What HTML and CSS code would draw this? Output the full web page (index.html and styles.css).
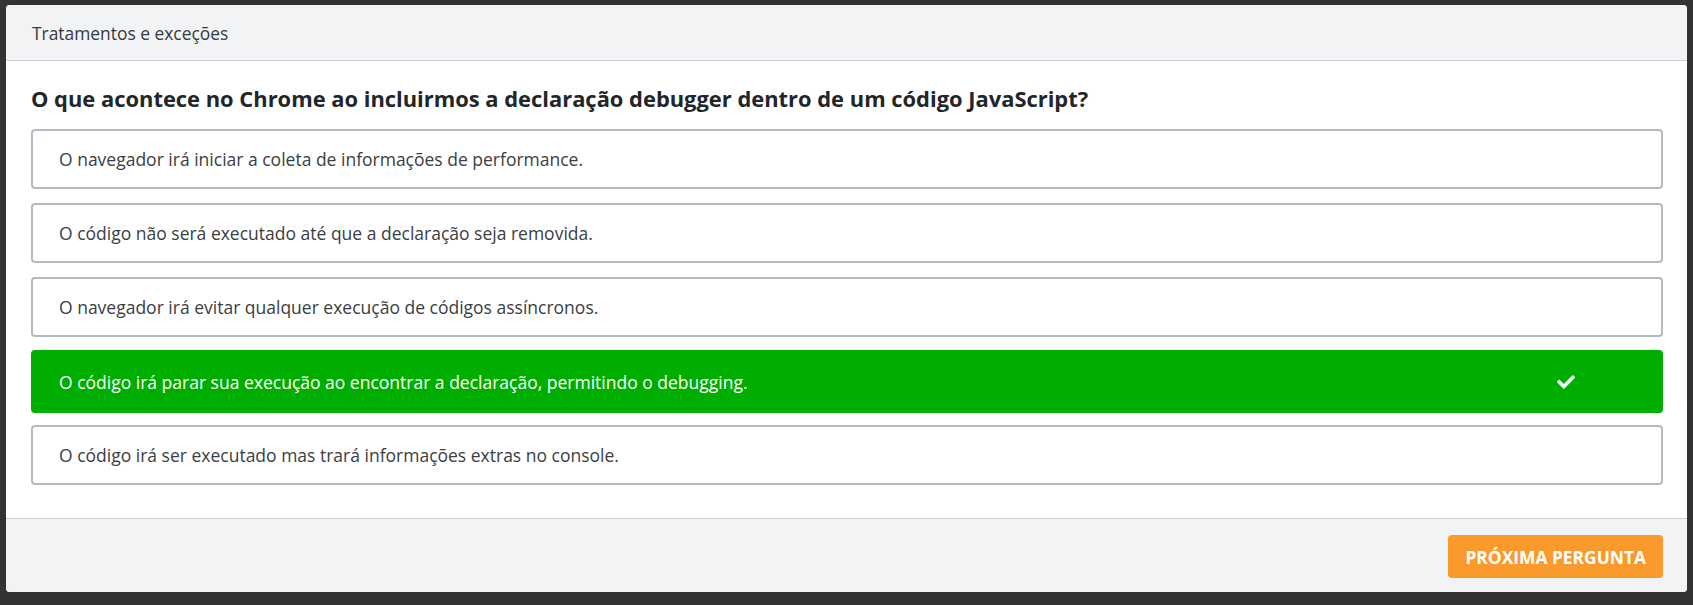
FILE: index.html
```html
<!DOCTYPE html>
<html lang="pt-BR">
<head>
<meta charset="utf-8">
<title>Quiz</title>
<link rel="stylesheet" href="styles.css">
</head>
<body>
<div class="card">
  <div class="card-header">Tratamentos e exceções</div>
  <div class="card-body">
    <h2 class="question">O que acontece no Chrome ao incluirmos a declaração debugger dentro de um código JavaScript?</h2>
    <div class="options">
      <div class="option">O navegador irá iniciar a coleta de informações de performance.</div>
      <div class="option">O código não será executado até que a declaração seja removida.</div>
      <div class="option">O navegador irá evitar qualquer execução de códigos assíncronos.</div>
      <div class="option option-correct">
        <span>O código irá parar sua execução ao encontrar a declaração, permitindo o debugging.</span>
        <svg class="check" viewBox="0 0 512 512" width="18" height="18" aria-hidden="true"><path fill="#fff" d="M173.898 439.404l-166.4-166.4c-9.997-9.997-9.997-26.206 0-36.204l36.203-36.204c9.997-9.998 26.207-9.998 36.204 0L192 312.69 432.095 72.596c9.997-9.997 26.207-9.997 36.204 0l36.203 36.204c9.997 9.997 9.997 26.206 0 36.204l-294.4 294.401c-9.998 9.997-26.207 9.997-36.204-.001z"/></svg>
      </div>
      <div class="option">O código irá ser executado mas trará informações extras no console.</div>
    </div>
  </div>
  <div class="card-footer">
    <button class="btn-next" type="button">PRÓXIMA PERGUNTA</button>
  </div>
</div>
</body>
</html>
```

FILE: styles.css
```css
html, body {
  margin: 0;
  background: #333333;
}
body {
  padding: 5px 6px 13px;
  font-family: "Open Sans", "Noto Sans", sans-serif;
}
.card {
  background: #ffffff;
  border-radius: 4px;
  overflow: hidden;
}
.card-header {
  height: 55px;
  display: flex;
  align-items: center;
  padding-left: 26px;
  background: #f2f3f5;
  border-bottom: 1px solid #cdd1d5;
  font-size: 17.4px;
  color: #343a40;
}
.card-body {
  padding: 23px 24px 33px 25px;
}
.question {
  margin: 0 0 15px;
  font-size: 21.9px;
  line-height: 30px;
  font-weight: 700;
  color: #222629;
}
.options {
  display: flex;
  flex-direction: column;
  gap: 14px;
}
.option {
  box-sizing: border-box;
  height: 60px;
  display: flex;
  align-items: center;
  justify-content: space-between;
  padding: 0 26px;
  border: 2px solid #b3b9c0;
  border-radius: 4px;
  font-size: 17.5px;
  color: #3b3e42;
  background: #fff;
}
.option-correct {
  height: 63px;
  margin: -1px 0 -2px;
  background: #00ae00;
  border-color: #00ae00;
  color: #ffffff;
  font-weight: 500;
}
.check {
  margin-right: 60px;
  display: block;
}
.card-footer {
  display: flex;
  justify-content: flex-end;
  padding: 16px 24px 14px;
  background: #f2f3f5;
  border-top: 1px solid #cdd1d5;
}
.btn-next {
  height: 43px;
  padding: 0 17px;
  border: none;
  border-radius: 4px;
  background: #fa9a2c;
  color: #ffffff;
  font-family: "Open Sans", "Noto Sans", sans-serif;
  font-size: 17.4px;
  font-weight: 700;
}
```
